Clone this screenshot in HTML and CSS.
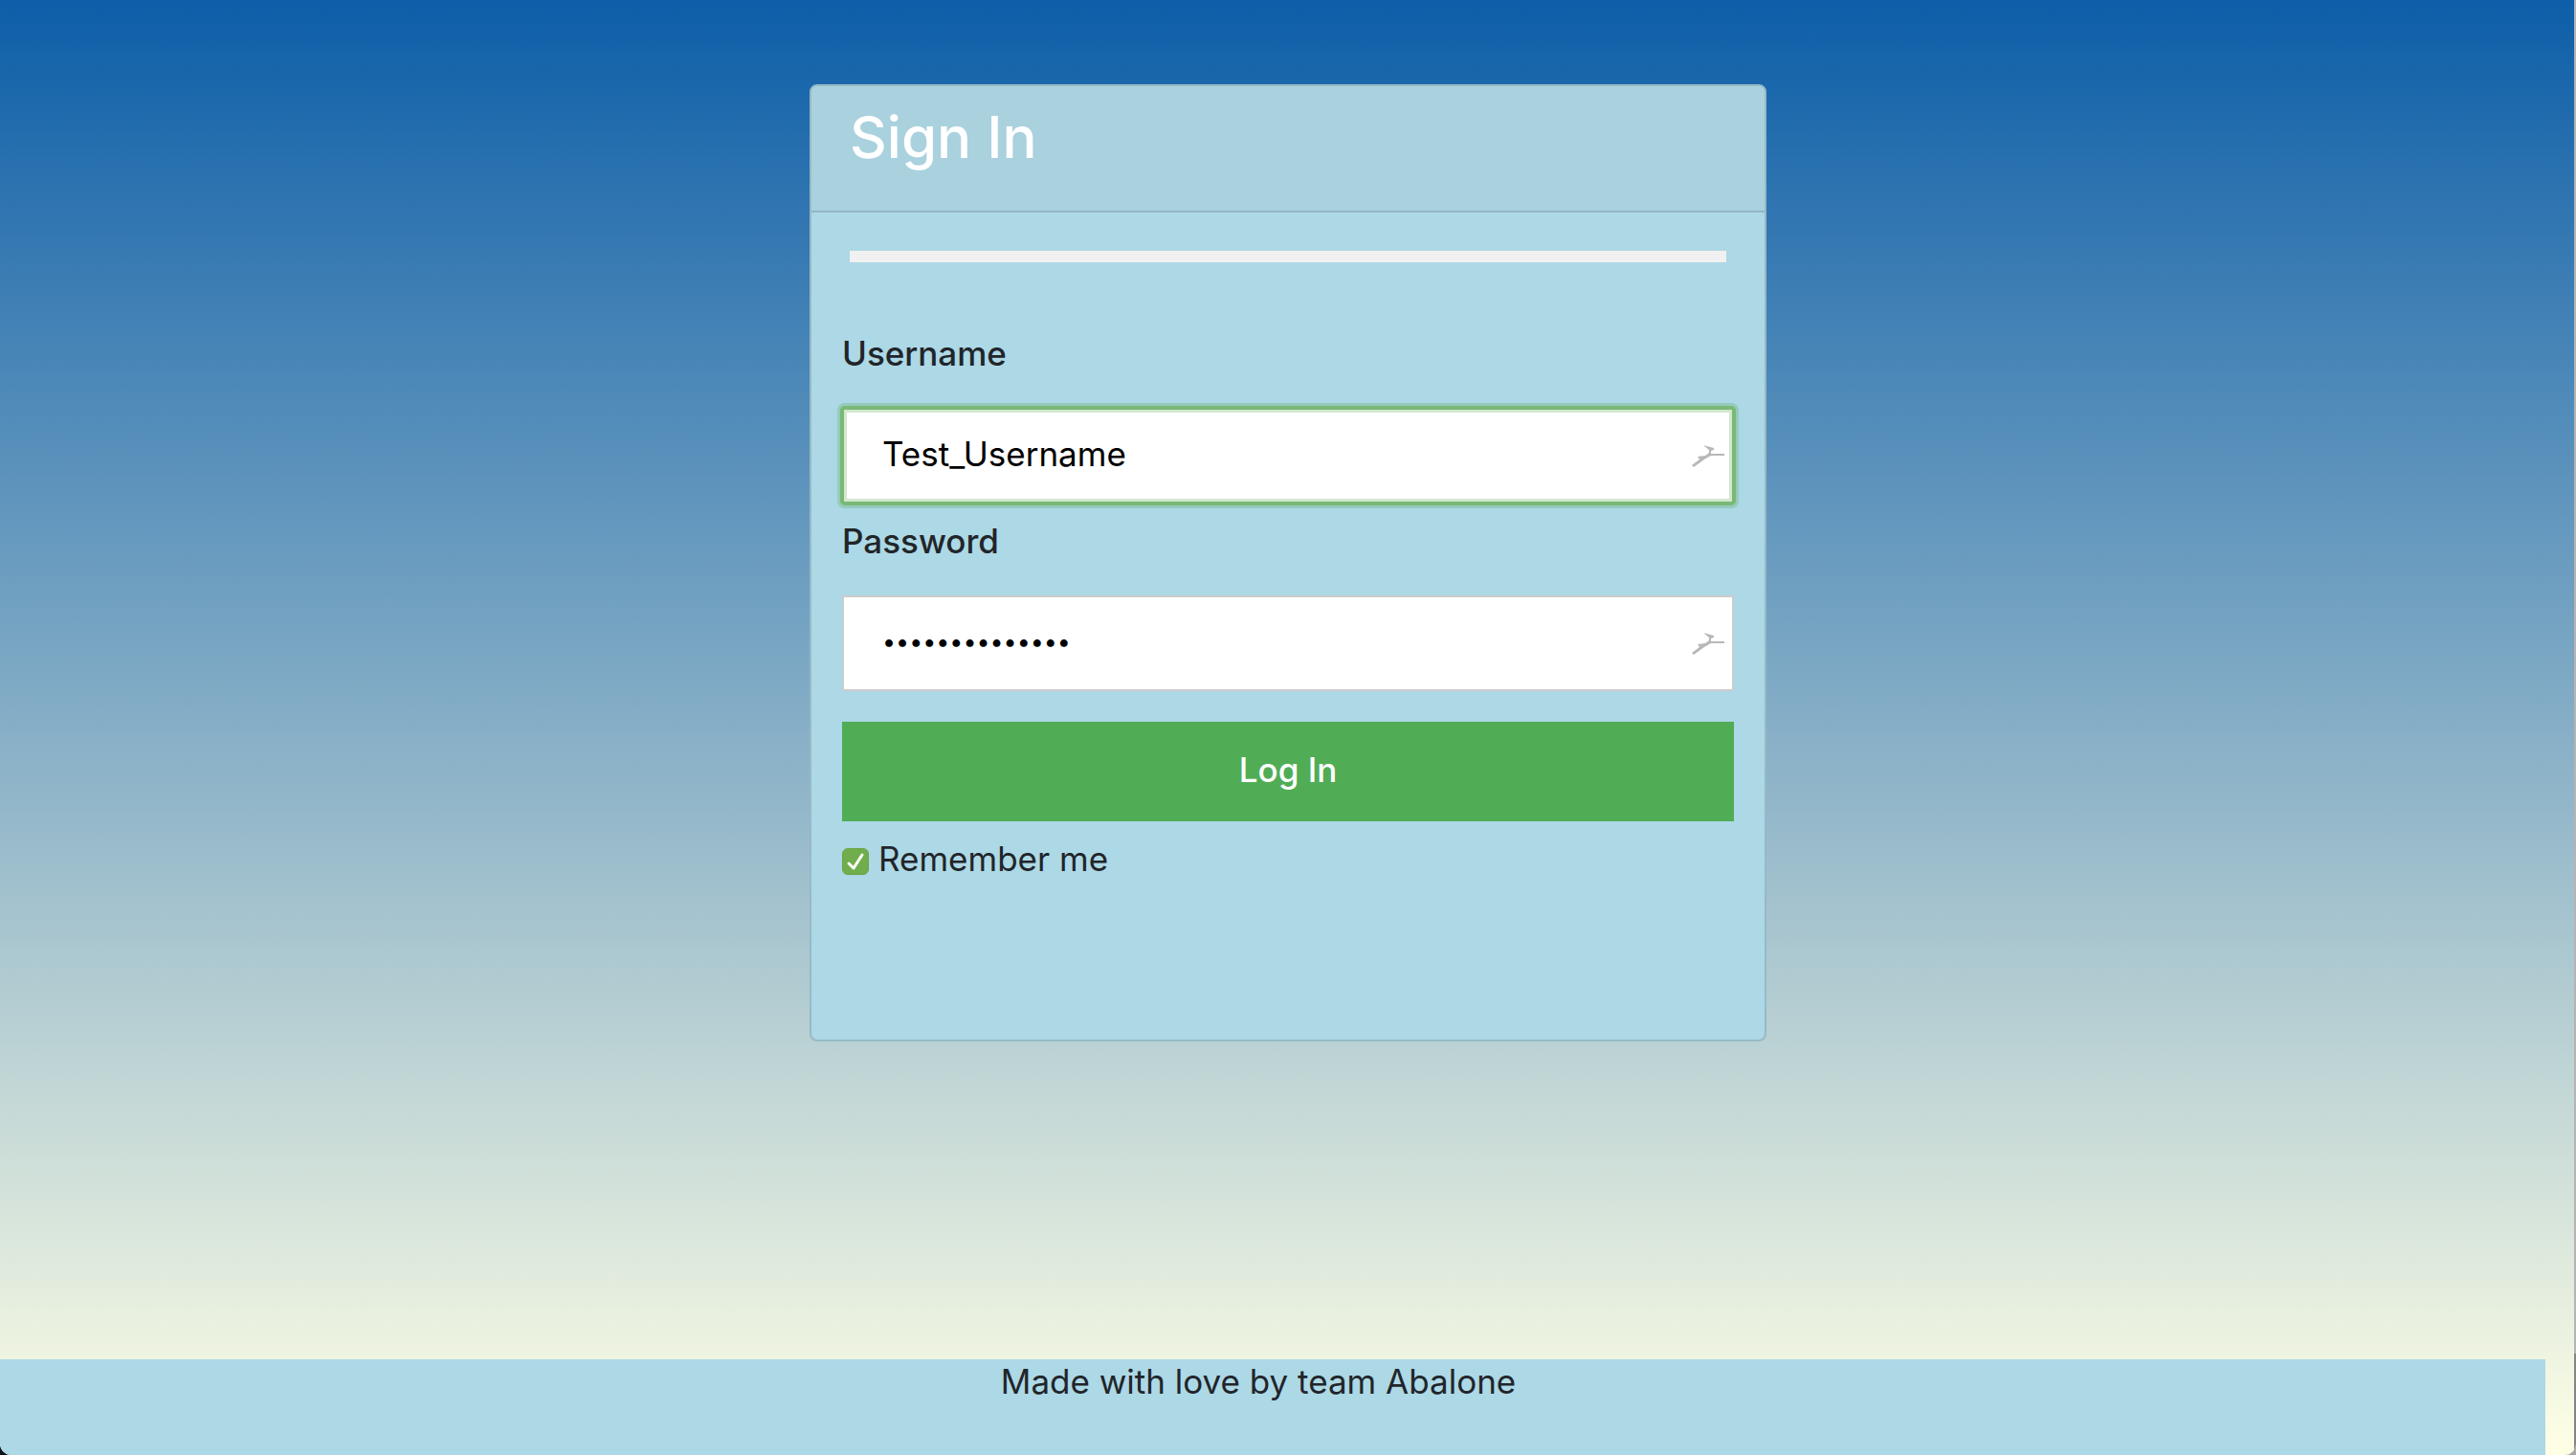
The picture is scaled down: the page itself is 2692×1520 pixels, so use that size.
FILE: index.html
```html
<!DOCTYPE html>
<html lang="en">
<head>
<meta charset="utf-8">
<title>Sign In</title>
<link rel="stylesheet" href="styles.css">
</head>
<body>
<div class="page">
  <main class="main">
    <section class="card">
      <header class="card-header"><h1 class="title">Sign In</h1></header>
      <div class="rule"></div>
      <form class="form">
        <label class="label" for="username">Username</label>
        <div class="field">
          <input class="input input-active" id="username" type="text" value="Test_Username">
          <svg class="bird" viewBox="0 0 34 24" aria-hidden="true"><path d="M0 21 L8 15 L6 12 L14 11 L18 8 L18 5 L12 0 L23 3 L23 5 L20 6 L20 9 L34 9 L34 11 L20 11 L13 15 L2 23 Z"/></svg>
        </div>
        <label class="label" for="password">Password</label>
        <div class="field">
          <input class="input input-password" id="password" type="password" value="abalone-team-1">
          <svg class="bird" viewBox="0 0 34 24" aria-hidden="true"><path d="M0 21 L8 15 L6 12 L14 11 L18 8 L18 5 L12 0 L23 3 L23 5 L20 6 L20 9 L34 9 L34 11 L20 11 L13 15 L2 23 Z"/></svg>
        </div>
        <button class="button" type="button">Log In</button>
        <label class="remember">
          <span class="tick">
            <input class="checkbox" type="checkbox" checked>
            <svg class="check" viewBox="0 0 28 28" aria-hidden="true"><path d="M7 16 L12 21 L21 7"/></svg>
          </span>
          <span>Remember me</span>
        </label>
      </form>
    </section>
  </main>
  <footer class="footer">Made with love by team Abalone</footer>
</div>
</body>
</html>
```
FILE: styles.css
```css
* { box-sizing: border-box; }

body {
  margin: 0;
  background: linear-gradient(to right, #10121c 50%, #a8a8a8 50%);
  color: #212529;
  font: 35px/46px Inter, "Liberation Sans", sans-serif;
}

.page {
  position: relative;
  display: flex;
  flex-direction: column;
  min-height: 100vh;
  border-radius: 0 0 12px 12px;
  overflow: hidden;
  background: linear-gradient(#0d5ea8, #ffffe5);
}

/* thin window edge along the right side */
.page::after {
  content: "";
  position: absolute;
  top: 0;
  right: 0;
  bottom: 0;
  width: 2px;
  background: linear-gradient(#b4b4b4 93%, #858585 93%);
}

.main {
  flex: 1;
  padding: 88px 32px;
}

.card {
  max-width: 1000px;
  min-height: 1000px;
  margin: 0 auto;
  border: 2px solid #97bac6;
  border-radius: 8px;
  background: #add8e6;
  overflow: hidden;
}

.card-header {
  padding: 20px 40px 44px;
  border-bottom: 2px solid #93b7c3;
  background: #a9d1de;
}

.title {
  margin: 0;
  color: #fff;
  font-size: 60px;
  font-weight: 500;
  line-height: 66px;
}

.rule {
  height: 12px;
  margin: 40px 40px 0;
  background: #f1f1f1;
}

.form {
  padding: 72px 32px 32px;
}

.label {
  display: block;
  height: 80px;
  font-weight: 500;
}

.field {
  position: relative;
  margin-bottom: 16px;
}

.input {
  display: block;
  width: 100%;
  height: 100px;
  padding: 0 40px 4px;
  border: 2px solid #ccc;
  border-radius: 0;
  outline: none;
  background: #fff;
  color: #000;
  font: inherit;
}

.input-active {
  border-color: #7ab875;
  border-radius: 3px;
  box-shadow: 0 0 0 2px #7ab875, 0 0 0 5px #95cbbb, inset 0 0 0 3px #d3e8cf;
}

.input-password {
  font-size: 25px;
}

.bird {
  position: absolute;
  top: 39px;
  right: 10px;
  width: 34px;
  height: 24px;
  fill: #b8b8b8;
}

.button {
  display: block;
  width: 100%;
  height: 104px;
  margin-top: 32px;
  padding: 0 0 4px;
  border: 0;
  background: #50ad55;
  color: #fff;
  font: inherit;
  font-weight: 500;
}

.remember {
  display: flex;
  align-items: center;
  gap: 10px;
  margin-top: 16px;
}

.tick {
  display: grid;
  padding-top: 6px;
}

.checkbox {
  grid-area: 1 / 1;
  width: 28px;
  height: 28px;
  margin: 0;
  appearance: none;
  border: 1px solid #68a746;
  border-radius: 6px;
  background: #70ad4c;
}

.check {
  grid-area: 1 / 1;
  width: 28px;
  height: 28px;
  fill: none;
  stroke: #fff;
  stroke-width: 3;
  stroke-linecap: round;
  stroke-linejoin: round;
  pointer-events: none;
}

.footer {
  height: 100px;
  margin-right: 32px;
  padding-right: 30px;
  background: #add8e6;
  text-align: center;
}
```
